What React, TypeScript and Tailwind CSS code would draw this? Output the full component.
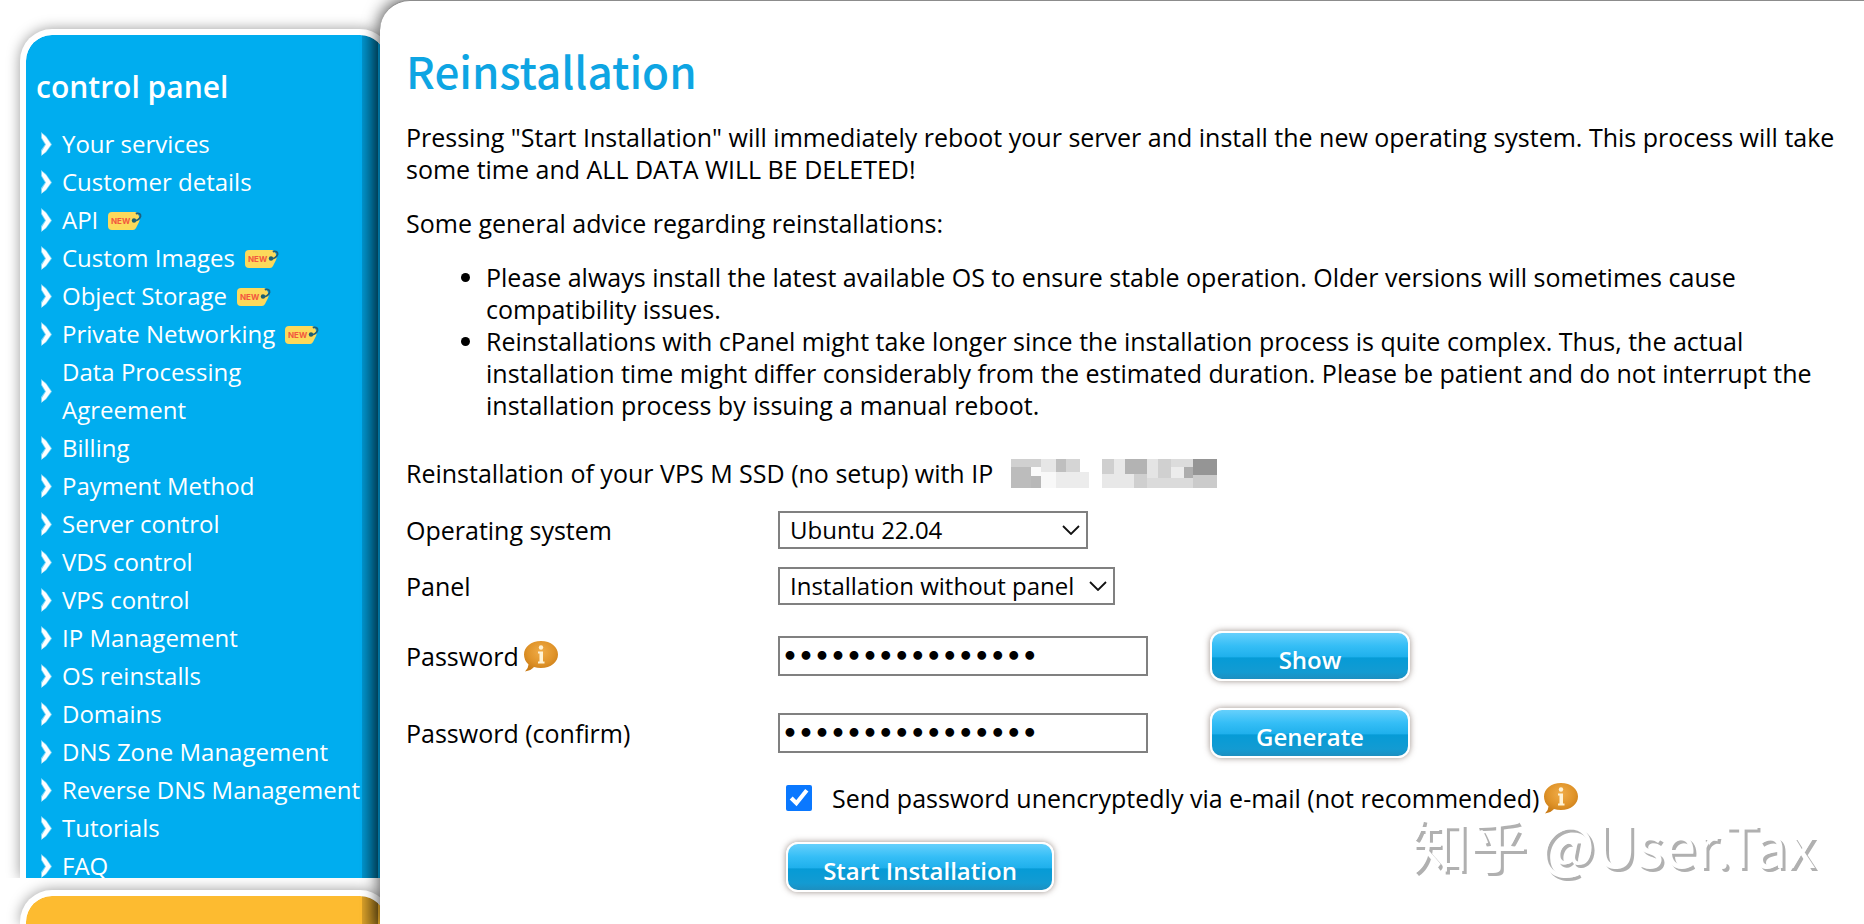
import React, { useState } from 'react';

interface MenuItem {
  label: string;
  isNew?: boolean;
}

const MENU_ITEMS: MenuItem[] = [
  { label: 'Your services' },
  { label: 'Customer details' },
  { label: 'API', isNew: true },
  { label: 'Custom Images', isNew: true },
  { label: 'Object Storage', isNew: true },
  { label: 'Private Networking', isNew: true },
  { label: 'Data Processing Agreement' },
  { label: 'Billing' },
  { label: 'Payment Method' },
  { label: 'Server control' },
  { label: 'VDS control' },
  { label: 'VPS control' },
  { label: 'IP Management' },
  { label: 'OS reinstalls' },
  { label: 'Domains' },
  { label: 'DNS Zone Management' },
  { label: 'Reverse DNS Management' },
  { label: 'Tutorials' },
  { label: 'FAQ' },
];

// x, y, width, height, fill of the tiles that hide the IP address
const MASK_TILES: [number, number, number, number, string][] = [
  [0, 0, 90, 25, '#d0d0d0'],
  [0, 25, 60, 62, '#bcbcbc'],
  [60, 25, 30, 25, '#fafafa'],
  [60, 50, 30, 37, '#b8b8b8'],
  [90, 0, 45, 40, '#e6e6e6'],
  [135, 0, 30, 40, '#bfbfbf'],
  [165, 0, 42, 40, '#d5d5d5'],
  [90, 40, 45, 47, '#f8f8f8'],
  [135, 40, 99, 47, '#ececec'],
  [273, 0, 35, 45, '#cfcfcf'],
  [308, 0, 34, 45, '#e8e8e8'],
  [342, 0, 66, 45, '#b3b3b3'],
  [408, 0, 32, 58, '#e4e4e4'],
  [440, 0, 40, 58, '#d0d0d0'],
  [480, 0, 66, 24, '#dcdcdc'],
  [480, 24, 38, 34, '#ececec'],
  [518, 24, 28, 34, '#adadad'],
  [546, 0, 72, 48, '#959595'],
  [273, 45, 95, 42, '#e8e8e8'],
  [368, 45, 40, 42, '#cfcfcf'],
  [408, 58, 138, 29, '#dbdbdb'],
  [546, 48, 72, 39, '#cbcbcb'],
];

const Chevron = () => (
  <svg className="h-6 w-[11px] shrink-0" viewBox="0 0 11 24" aria-hidden="true">
    <path d="M0 0 5 4 11 12.500 5 20.500 0 24V18L4 12.500 0 6Z" fill="#7fd6f7" />
    <path d="M1 1.500 5 5 10 12.500 5 19.500 1 23V19L5 12.500 1 6Z" fill="#fff" />
  </svg>
);

const NewBadge = () => (
  <svg className="h-5 w-[34px] shrink-0" viewBox="0 0 34 20" role="img" aria-label="new">
    <path d="M4 2H27Q29 2 30 4L31.500 8Q32 10 31 12L28 18Q27 20 25 20H4Q0 20 0 16V6Q0 2 4 2Z" fill="#fcd95b" />
    <text x="3" y="14" fontSize="8" fontWeight="700" fontFamily="Inter, sans-serif" fill="#f2573f">NEW</text>
    <circle cx="26" cy="10.500" r="2.200" fill="#1d5f6d" />
    <path d="M26 11Q31 10.500 32.500 6.500 33 3 28.500 3.500" fill="none" stroke="#1d5f7d" strokeWidth="1.800" strokeLinecap="round" />
  </svg>
);

const InfoIcon = () => (
  <svg className="h-8 w-9 shrink-0" viewBox="0 0 36 32" role="img" aria-label="Info">
    <defs>
      <radialGradient id="bubble" cx="0.5" cy="0.35" r="0.65">
        <stop offset="0" stopColor="#f0ac48" />
        <stop offset="0.6" stopColor="#e0942a" />
        <stop offset="1" stopColor="#c97b16" />
      </radialGradient>
    </defs>
    <path d="M18 1C28 1 35 7 35 14.500S28 28 18 28Q14 28 11 27 8 30.500 2 31.500 5.500 28 5.500 24.500 1 20.500 1 14.500C1 7 8 1 18 1Z" fill="url(#bubble)" />
    <circle cx="18" cy="7.500" r="2.200" fill="#fff3d6" />
    <path d="M15 11.500H20V21.500H21.500V23.500H15V21.500H16.500V13.500H15Z" fill="#fff3d6" />
  </svg>
);

// Shade that the main sheet throws on the boxes of the sidebar
const EdgeShade = () => (
  <div className="absolute inset-y-0 right-2 w-4 bg-linear-to-r from-black/15 to-black/45" />
);

interface SelectBoxProps {
  id: string;
  options: string[];
  className: string;
}

const SelectBox: React.FC<SelectBoxProps> = ({ id, options, className }) => (
  <div className={`relative ${className}`}>
    <select id={id} className="block h-[38px] w-full appearance-none border-2 border-[#808080] bg-white pl-[10px] text-2xl leading-8">
      {options.map((option) => <option key={option}>{option}</option>)}
    </select>
    <svg className="pointer-events-none absolute top-[14px] right-2 h-[10px] w-[18px]" viewBox="0 0 18 10" fill="none" stroke="#111" strokeWidth="1.800" aria-hidden="true">
      <path d="M1 1 9 9 17 1" />
    </svg>
  </div>
);

interface GlossyButtonProps {
  children: React.ReactNode;
  className: string;
  type?: 'button' | 'submit';
  onClick?: () => void;
}

const GlossyButton: React.FC<GlossyButtonProps> = ({ children, className, type = 'button', onClick }) => (
  <button
    type={type}
    onClick={onClick}
    className={`h-[50px] rounded-xl border-2 border-white bg-[linear-gradient(to_bottom,#66d0fc_0%,#35bef6_28%,#1fb0ec_52%,#069bd6_54%,#139bd2_85%,#1d8fc0_100%)] pt-2 text-2xl leading-8 font-semibold text-white shadow-[0_0_6px_rgba(90,70,60,0.6)] ${className}`}
  >
    {children}
  </button>
);

const inputStyles = 'h-10 w-[370px] border-2 border-[#808080] bg-white pl-[2px] font-["DejaVu_Sans",sans-serif] font-bold';

export default function App() {
  const [password, setPassword] = useState('k8Tq2vXw9LmZ4bRs');
  const [confirm, setConfirm] = useState('k8Tq2vXw9LmZ4bRs');
  const [visible, setVisible] = useState(false);

  const generate = () => {
    const next = Array.from({ length: 16 }, () => Math.floor(Math.random() * 36).toString(36)).join('');
    setPassword(next);
    setConfirm(next);
  };

  return (
    <div className='flex min-h-screen overflow-hidden bg-white font-["Open_Sans",sans-serif] text-[25px] leading-8 text-black'>
      <aside className="flex w-[392px] shrink-0 flex-col pt-[29px] pl-5 text-white">
        <div className="[clip-path:inset(-29px_-20px_0_-20px)]">
          <div className="relative overflow-hidden rounded-t-[32px] border-6 border-b-0 border-white bg-[#00adef] bg-clip-padding shadow-[0_0_14px_rgba(0,0,0,0.4)]">
            <EdgeShade />
            <nav className="relative pt-8 pl-[10px]">
              <h2 className="text-[30px] leading-10 font-semibold">control panel</h2>
              <ul className="-mb-[7px] pt-[18px] pl-[5px] text-2xl leading-[38px]">
                {MENU_ITEMS.map((item) => (
                  <li key={item.label}>
                    <a href="#" className="flex items-center gap-[10px]">
                      <Chevron />
                      <span className={item.label.length > 22 ? 'w-52' : 'whitespace-nowrap'}>{item.label}</span>
                      {item.isNew && <NewBadge />}
                    </a>
                  </li>
                ))}
              </ul>
            </nav>
          </div>
        </div>
        <div className="flex flex-1 flex-col pt-3 [clip-path:inset(0_-20px)]">
          <div className="relative flex-1 overflow-hidden rounded-t-[32px] border-6 border-b-0 border-white bg-[#fdbb30] bg-clip-padding shadow-[0_0_14px_rgba(0,0,0,0.4)]">
            <EdgeShade />
          </div>
        </div>
      </aside>

      <main className="relative z-10 -ml-3 flex-1 rounded-tl-[30px] border-t border-[#8c8c8c] bg-white pt-[39px] pr-5 pl-[26px] shadow-[0_0_16px_2px_rgba(0,0,0,0.65)]">
        <h1 className='font-["Noto_Sans_CJK_SC",sans-serif] text-[44px] leading-[60px] font-medium text-[#0ea5e3]'>Reinstallation</h1>
        <p className="mt-[21px]">
          Pressing "Start Installation" will immediately reboot your server and install the new operating system. This process will take some time and ALL DATA WILL BE DELETED!
        </p>
        <p className="mt-[22px]">Some general advice regarding reinstallations:</p>
        <ul className="mt-[22px] list-disc pl-20">
          <li>Please always install the latest available OS to ensure stable operation. Older versions will sometimes cause compatibility issues.</li>
          <li>
            Reinstallations with cPanel might take longer since the installation process is quite complex. Thus, the actual installation time might differ considerably from the estimated duration. Please be patient and do not interrupt the installation process by issuing a manual reboot.
          </li>
        </ul>

        <form className="mt-9" onSubmit={(e) => e.preventDefault()}>
          <p className="flex items-center gap-[18px]">
            Reinstallation of your VPS M SSD (no setup) with IP
            <svg className="h-[29px] w-[206px]" viewBox="0 0 618 87" shapeRendering="crispEdges" role="img" aria-label="hidden address">
              {MASK_TILES.map(([x, y, width, height, fill]) => (
                <rect key={`${x}-${y}`} x={x} y={y} width={width} height={height} fill={fill} />
              ))}
            </svg>
          </p>

          <div className="mt-[13px] grid grid-cols-[372px_432px_1fr] grid-rows-[56px_56px_84px_70px] items-center">
            <label htmlFor="os">Operating system</label>
            <SelectBox id="os" options={['Ubuntu 22.04', 'Ubuntu 20.04', 'Debian 11']} className="col-span-2 w-[310px]" />

            <label htmlFor="panel">Panel</label>
            <SelectBox id="panel" options={['Installation without panel', 'cPanel', 'Plesk']} className="col-span-2 w-[337px]" />

            <div className="flex items-center gap-1">
              <label htmlFor="password">Password</label>
              <InfoIcon />
            </div>
            <input
              id="password"
              type={visible ? 'text' : 'password'}
              value={password}
              onChange={(e) => setPassword(e.target.value)}
              className={inputStyles}
            />
            <GlossyButton className="w-[200px]" onClick={() => setVisible(!visible)}>Show</GlossyButton>

            <label htmlFor="confirm">Password (confirm)</label>
            <input
              id="confirm"
              type={visible ? 'text' : 'password'}
              value={confirm}
              onChange={(e) => setConfirm(e.target.value)}
              className={inputStyles}
            />
            <GlossyButton className="w-[200px]" onClick={generate}>Generate</GlossyButton>
          </div>

          <div className="pl-[380px]">
            <div className="flex h-[60px] items-center">
              <input id="send-mail" type="checkbox" defaultChecked className="mr-5 size-[26px] accent-[#0a78ff]" />
              <label htmlFor="send-mail" className="mr-1">Send password unencryptedly via e-mail (not recommended)</label>
              <InfoIcon />
            </div>
            <GlossyButton type="submit" className="mt-[14px] w-[268px]">Start Installation</GlossyButton>
          </div>
        </form>

        <p className='pointer-events-none absolute right-12 bottom-[52px] font-["Noto_Sans_CJK_SC",sans-serif] text-[58px] leading-[58px] text-white [text-shadow:3px_3px_0_#b0b0b0]'>
          知乎 @User.Tax
        </p>
      </main>
    </div>
  );
}
